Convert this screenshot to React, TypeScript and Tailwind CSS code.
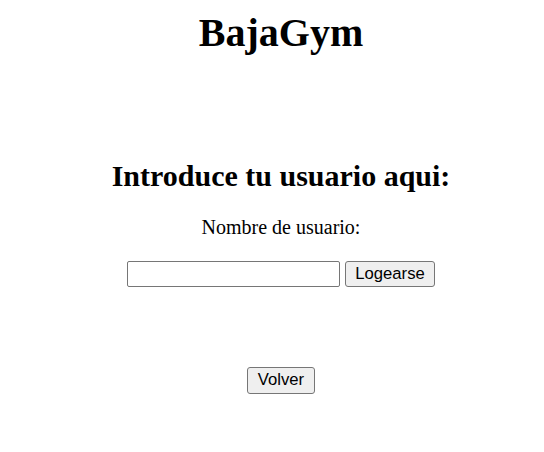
export default function App() {
    return (
        <div className="min-h-[452px] bg-white text-black text-center font-['Liberation_Serif','Times_New_Roman',serif] pt-[10px] pl-[18px]">
            <h1 className="text-[40px] font-bold leading-[46px]">BajaGym</h1>

            <div className="mt-[103px]">
                <h2 className="text-[30px] font-bold leading-[34px]">Introduce tu usuario aqui:</h2>
                <p className="text-[20px] leading-[23px] mt-[23px]">Nombre de usuario:</p>

                {/* login form */}
                <div className="flex justify-center items-center gap-[5px] mt-[22px]">
                    <input type="text" className="w-[213px] h-[26px] border border-[#767676] rounded-[2px] bg-white outline-none px-[2px]" />
                    <button className="h-[26px] px-[9px] pb-[2px] border border-[#767676] rounded-[3px] bg-[#efefef] text-[16.67px] leading-[19px] font-['Liberation_Sans',Arial,sans-serif]">Logearse</button>
                </div>
            </div>

            <div className="flex justify-center mt-[80px]">
                <button className="h-[27px] px-[9.5px] pb-[2px] border border-[#767676] rounded-[3px] bg-[#efefef] text-[16.67px] leading-[19px] font-['Liberation_Sans',Arial,sans-serif]">Volver</button>
            </div>
        </div>
    )
}
